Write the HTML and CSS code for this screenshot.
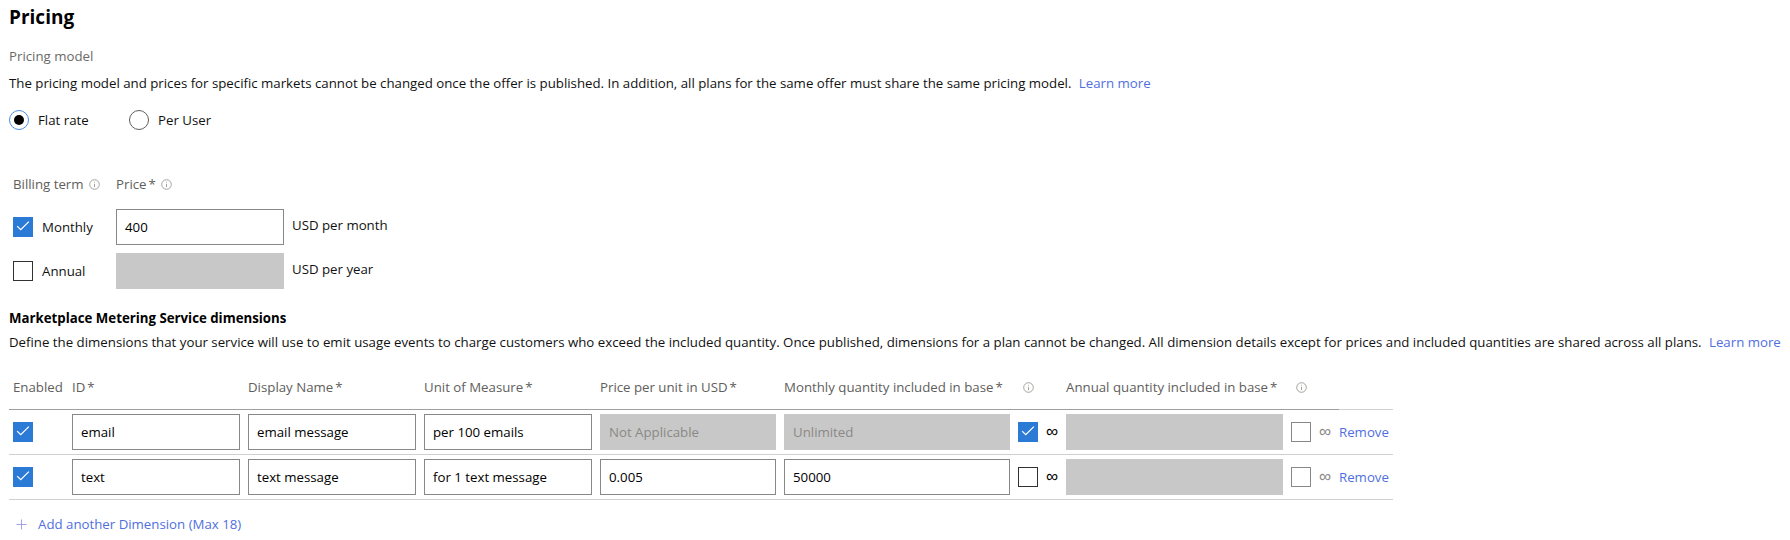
FILE: index.html
```html
<!DOCTYPE html>
<html lang="en">
<head>
<meta charset="utf-8">
<title>Pricing</title>
<link rel="stylesheet" href="styles.css">
</head>
<body>
<main class="page">
  <h1 class="page-title">Pricing</h1>
  <div class="field-label">Pricing model</div>
  <p class="desc">The pricing model and prices for specific markets cannot be changed once the offer is published. In addition, all plans for the same offer must share the same pricing model. <a class="link" href="#">Learn more</a></p>

  <div class="radio-group">
    <label class="radio-option"><span class="radio checked"></span><span>Flat rate</span></label>
    <label class="radio-option"><span class="radio"></span><span>Per User</span></label>
  </div>

  <div class="billing">
    <div class="col-head">Billing term<svg class="info" viewBox="0 0 11 11"><circle cx="5.5" cy="5.5" r="4.8"/><line x1="5.5" y1="4.8" x2="5.5" y2="8.2"/><line x1="5.5" y1="2.8" x2="5.5" y2="3.6"/></svg></div>
    <div class="col-head">Price<span class="req">*</span><svg class="info" viewBox="0 0 11 11"><circle cx="5.5" cy="5.5" r="4.8"/><line x1="5.5" y1="4.8" x2="5.5" y2="8.2"/><line x1="5.5" y1="2.8" x2="5.5" y2="3.6"/></svg></div>
    <div></div>

    <div class="check-label"><span class="checkbox checked"><svg viewBox="0 0 20 20"><polyline points="3.5,9 7.5,13 16.5,4"/></svg></span>Monthly</div>
    <div class="input">400</div>
    <div class="unit">USD per month</div>

    <div class="check-label"><span class="checkbox"></span>Annual</div>
    <div class="input disabled"></div>
    <div class="unit">USD per year</div>
  </div>

  <h2 class="section-title">Marketplace Metering Service dimensions</h2>
  <p class="desc desc-tight">Define the dimensions that your service will use to emit usage events to charge customers who exceed the included quantity. Once published, dimensions for a plan cannot be changed. All dimension details except for prices and included quantities are shared across all plans. <a class="link" href="#">Learn more</a></p>

  <div class="dims">
    <div class="dims-head">
      <div class="h-enabled">Enabled</div>
      <div>ID<span class="req">*</span></div>
      <div>Display Name<span class="req">*</span></div>
      <div>Unit of Measure<span class="req">*</span></div>
      <div>Price per unit in USD<span class="req">*</span></div>
      <div>Monthly quantity included in base<span class="req">*</span></div>
      <div class="h-icon"><svg class="info" viewBox="0 0 11 11"><circle cx="5.5" cy="5.5" r="4.8"/><line x1="5.5" y1="4.8" x2="5.5" y2="8.2"/><line x1="5.5" y1="2.8" x2="5.5" y2="3.6"/></svg></div>
      <div></div>
      <div>Annual quantity included in base<span class="req">*</span></div>
      <div class="h-icon"><svg class="info" viewBox="0 0 11 11"><circle cx="5.5" cy="5.5" r="4.8"/><line x1="5.5" y1="4.8" x2="5.5" y2="8.2"/><line x1="5.5" y1="2.8" x2="5.5" y2="3.6"/></svg></div>
      <div></div>
    </div>

    <div class="dims-body">
      <div class="dim-row">
        <div class="cell-check"><span class="checkbox checked"><svg viewBox="0 0 20 20"><polyline points="3.5,9 7.5,13 16.5,4"/></svg></span></div>
        <div class="input">email</div>
        <div class="input">email message</div>
        <div class="input">per 100 emails</div>
        <div class="input disabled">Not Applicable</div>
        <div class="input disabled">Unlimited</div>
        <span class="checkbox checked"><svg viewBox="0 0 20 20"><polyline points="3.5,9 7.5,13 16.5,4"/></svg></span>
        <span class="inf">∞</span>
        <div class="input disabled"></div>
        <span class="checkbox muted"></span>
        <span class="inf muted">∞</span>
        <a class="link remove" href="#">Remove</a>
      </div>
      <div class="dim-row">
        <div class="cell-check"><span class="checkbox checked"><svg viewBox="0 0 20 20"><polyline points="3.5,9 7.5,13 16.5,4"/></svg></span></div>
        <div class="input">text</div>
        <div class="input">text message</div>
        <div class="input">for 1 text message</div>
        <div class="input">0.005</div>
        <div class="input">50000</div>
        <span class="checkbox"></span>
        <span class="inf">∞</span>
        <div class="input disabled"></div>
        <span class="checkbox muted"></span>
        <span class="inf muted">∞</span>
        <a class="link remove" href="#">Remove</a>
      </div>
    </div>
  </div>

  <a class="add-link" href="#"><svg class="plus" viewBox="0 0 12 12"><line x1="6" y1="0.5" x2="6" y2="11.5"/><line x1="0.5" y1="6" x2="11.5" y2="6"/></svg>Add another Dimension (Max 18)</a>
</main>
</body>
</html>
```

FILE: styles.css
```css
* { box-sizing: border-box; }

body {
  margin: 0;
  background: #ffffff;
  color: #111111;
  font-family: "Open Sans", "Noto Sans", sans-serif;
  font-size: 13.25px;
  line-height: 20px;
}

.page {
  padding: 0 0 0 9px;
}

.page-title {
  margin: 5px 0 0;
  font-size: 19px;
  line-height: 24px;
  font-weight: 700;
  color: #000;
}

.field-label {
  margin-top: 17px;
  color: #6b6967;
}

.desc {
  margin: 7px 0 0;
  color: #111111;
  white-space: nowrap;
}

.desc-tight { margin-top: 4px; }

.link {
  color: #4f6fe0;
  text-decoration: none;
  margin-left: 4px;
}

.radio-group {
  display: flex;
  align-items: center;
  margin-top: 17px;
  height: 20px;
}

.radio-option {
  display: flex;
  align-items: center;
  gap: 9px;
  min-width: 120px;
}

.radio {
  width: 20px;
  height: 20px;
  border-radius: 50%;
  border: 1px solid #605e5c;
  display: flex;
  align-items: center;
  justify-content: center;
}

.radio.checked { border-color: #4a8fe0; }
.radio.checked::after {
  content: "";
  width: 10px;
  height: 10px;
  border-radius: 50%;
  background: #000;
}

.billing {
  display: grid;
  grid-template-columns: 103px 168px auto;
  row-gap: 8px;
  margin-top: 44px;
  padding-left: 4px;
  align-items: center;
}

.col-head {
  color: #605e5c;
  display: flex;
  align-items: center;
  white-space: nowrap;
  margin-bottom: 7px;
}

.info {
  width: 11px;
  height: 11px;
  margin-left: 5px;
  fill: none;
  stroke: #9a9896;
  stroke-width: 0.9;
}

.req {
  margin-left: 2px;
  color: #605e5c;
}

.check-label {
  display: flex;
  align-items: center;
  gap: 9px;
}

.checkbox {
  width: 20px;
  height: 20px;
  border: 1px solid #323130;
  background: #fff;
  display: inline-flex;
  flex: none;
}

.checkbox.checked {
  background: #2b7bd6;
  border-color: #2b7bd6;
}

.checkbox svg {
  width: 18px;
  height: 18px;
  fill: none;
  stroke: #fff;
  stroke-width: 1.4;
}

.checkbox.muted { border-color: #8a8886; }

.input {
  height: 36px;
  border: 1px solid #8a8886;
  padding: 0 8px;
  display: flex;
  align-items: center;
  color: #000;
  background: #fff;
  white-space: nowrap;
  overflow: hidden;
}

.input.disabled {
  background: #c8c8c8;
  border-color: #c8c8c8;
  color: #8a8886;
}

.unit {
  margin-left: 8px;
  margin-top: -4px;
  color: #111111;
}

.section-title {
  margin: 19px 0 0;
  font-size: 13.25px;
  line-height: 20px;
  font-weight: 700;
  color: #000;
}

.dims { margin-top: 25px; }

.dims-head,
.dim-row {
  display: grid;
  grid-template-columns: 55px 168px 168px 168px 176px 226px 20px 12px 217px 20px 12px;
  column-gap: 8px;
}

.dims-head {
  position: relative;
  z-index: 1;
  width: 1330px;
  height: 33px;
  padding-bottom: 12px;
  border-bottom: 1px solid #a19f9d;
  color: #605e5c;
}

.dims-head > div {
  white-space: nowrap;
}

.h-enabled { padding-left: 4px; }

.h-icon {
  display: flex;
  justify-content: center;
  padding-top: 5px;
}
.h-icon .info { margin-left: 0; }

.dims-body {
  width: 1384px;
  margin-top: -1px;
  border-top: 1px solid #d2d0ce;
}

.dim-row {
  grid-template-columns: 55px 168px 168px 168px 176px 226px 20px 12px 217px 20px 12px 1fr;
  align-items: center;
  padding: 4px 0;
  border-bottom: 1px solid #d2d0ce;
}

.cell-check { padding-left: 4px; display: flex; }

.inf {
  font-family: "Liberation Sans", sans-serif;
  font-size: 17px;
  line-height: 20px;
  color: #000;
  display: flex;
  justify-content: center;
  white-space: nowrap;
}
.inf.muted { color: #8a8886; }

.remove { margin-left: 0; }

.add-link {
  display: inline-flex;
  align-items: center;
  margin-top: 14px;
  padding-left: 7px;
  gap: 11px;
  color: #4f6fe0;
  text-decoration: none;
}

.plus {
  width: 11px;
  height: 11px;
  stroke: #9a9ae0;
  stroke-width: 1;
}
```
